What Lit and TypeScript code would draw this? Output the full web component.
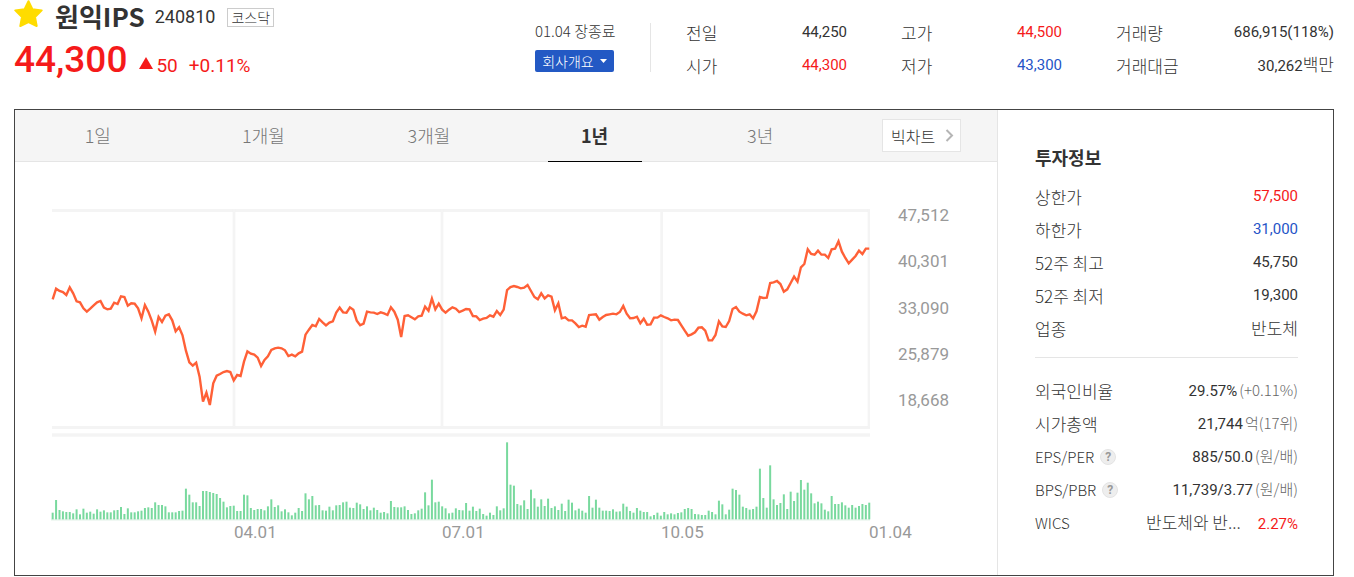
import { LitElement, html, svg, css } from "lit";
import { customElement, property, state } from "lit/decorators.js";
import { classMap } from "lit/directives/class-map.js";

type Tone = "up" | "down" | "flat";

interface Row {
  label: string;
  value: string;
  tone?: Tone;
  unit?: string;
  help?: boolean;
  text?: boolean;
}

// One entry per trading day, as depth below the top of the plot (thirds of a pixel).
const PRICES = [
  271, 239, 246, 249, 258, 235, 253, 277, 280, 298, 308, 299, 289, 280, 276, 296, 301, 299, 281, 285,
  262, 264, 290, 283, 284, 298, 328, 288, 308, 335, 368, 324, 339, 320, 316, 334, 367, 355, 379, 425,
  460, 470, 461, 503, 578, 551, 588, 523, 500, 495, 489, 486, 489, 514, 498, 501, 458, 427, 434, 437,
  446, 471, 453, 442, 423, 418, 416, 418, 424, 441, 437, 442, 433, 428, 377, 362, 348, 352, 330, 340,
  349, 341, 337, 311, 296, 310, 311, 295, 302, 335, 349, 344, 308, 310, 311, 315, 310, 313, 318, 295,
  308, 332, 384, 321, 319, 325, 331, 322, 320, 293, 305, 269, 301, 284, 302, 311, 302, 295, 299, 309,
  305, 300, 301, 321, 322, 333, 329, 327, 319, 323, 306, 318, 302, 243, 234, 231, 234, 238, 236, 228,
  246, 264, 271, 253, 268, 259, 263, 304, 283, 328, 325, 334, 334, 343, 354, 350, 353, 318, 317, 316,
  332, 324, 318, 316, 314, 316, 309, 291, 314, 328, 327, 323, 343, 329, 347, 346, 326, 326, 319, 324,
  328, 334, 332, 333, 349, 365, 380, 376, 370, 356, 355, 365, 394, 394, 378, 337, 352, 354, 336, 300,
  294, 308, 314, 319, 316, 328, 307, 264, 267, 266, 222, 220, 216, 225, 248, 241, 222, 203, 218, 175,
  165, 121, 135, 137, 125, 137, 137, 147, 121, 119, 97, 128, 147, 163, 152, 141, 125, 135, 119, 119,
];

const VOLUMES = [
  20, 58, 28, 24, 22, 22, 18, 30, 15, 32, 20, 23, 17, 30, 23, 27, 21, 21, 27, 28,
  37, 16, 33, 21, 21, 24, 26, 34, 36, 34, 51, 43, 43, 39, 21, 21, 21, 25, 26, 92,
  74, 51, 51, 40, 85, 85, 82, 79, 76, 64, 53, 36, 40, 41, 25, 25, 74, 72, 34, 28,
  31, 31, 27, 39, 60, 37, 42, 24, 30, 21, 12, 20, 34, 25, 78, 60, 70, 42, 43, 27,
  26, 38, 27, 42, 43, 51, 53, 35, 34, 50, 45, 31, 39, 27, 35, 28, 20, 22, 18, 55,
  37, 36, 36, 39, 28, 16, 18, 27, 32, 81, 42, 119, 51, 53, 39, 33, 18, 20, 33, 28,
  27, 49, 26, 38, 25, 32, 16, 11, 20, 13, 39, 27, 33, 231, 104, 101, 46, 42, 57, 31,
  89, 63, 38, 60, 40, 62, 34, 39, 28, 47, 25, 59, 50, 27, 32, 26, 20, 70, 35, 59,
  35, 26, 26, 25, 30, 23, 24, 47, 38, 25, 20, 34, 26, 22, 22, 9, 13, 20, 11, 22,
  15, 18, 15, 19, 21, 31, 34, 31, 16, 15, 13, 13, 26, 22, 15, 56, 45, 15, 29, 92,
  88, 74, 38, 34, 29, 31, 38, 152, 64, 35, 162, 60, 43, 49, 75, 31, 83, 55, 80, 118,
  89, 110, 78, 48, 53, 48, 29, 24, 70, 46, 46, 51, 42, 35, 43, 35, 40, 46, 43, 50,
];

const STEP = 10.25;
const BASE = 931;

@customElement("price-chart")
class PriceChart extends LitElement {
  static styles = css`
    :host {
      display: block;
      padding-left: 37px;
      font-family: Roboto, sans-serif;
      font-size: 17px;
      line-height: 20px;
      color: #999;
    }
    .plot {
      display: grid;
      grid-template-columns: 1fr 127px;
    }
    svg {
      display: block;
      width: 100%;
      height: 312px;
      overflow: visible;
    }
    .scale {
      display: flex;
      flex-direction: column;
      justify-content: space-between;
      height: 205px;
      padding-right: 48px;
      margin-top: -4px;
      text-align: right;
    }
    .dates {
      display: grid;
      grid-template-columns: 182fr 208fr 219fr 208fr 128px;
      padding-top: 1px;
    }
    .dates span:first-child {
      grid-column: 2;
    }
  `;

  render() {
    const points = PRICES.map((y, i) => `${2 + i * STEP},${y}`).join(" ");
    return html`
      <div class="plot">
        <svg viewBox="0 0 2454 936" preserveAspectRatio="none" role="img" aria-label="1년 주가 차트">
          <g fill="#f4f4f4">
            <rect x="0" y="0" width="2454" height="9"></rect>
            <rect x="0" y="651" width="2454" height="9"></rect>
            <rect x="0" y="673" width="2454" height="10"></rect>
            <rect x="542" y="0" width="8" height="655"></rect>
            <rect x="1166" y="0" width="8" height="655"></rect>
            <rect x="1825" y="0" width="8" height="655"></rect>
            <rect x="2447" y="0" width="7" height="655"></rect>
          </g>
          <rect x="-3" y="929" width="2457" height="6" fill="#e9f5ee"></rect>
          <g fill="#79d99e">
            ${VOLUMES.map(
              (v, i) => svg`<rect x=${-1 + i * STEP} y=${BASE - v} width="6" height=${v}></rect>`
            )}
          </g>
          <polyline points=${points} fill="none" stroke="#ff6037" stroke-width="2.4"
            stroke-linejoin="miter" vector-effect="non-scaling-stroke"></polyline>
        </svg>
        <div class="scale">
          ${["47,512", "40,301", "33,090", "25,879", "18,668"].map((t) => html`<span>${t}</span>`)}
        </div>
      </div>
      <div class="dates">
        ${["04.01", "07.01", "10.05", "01.04"].map((t) => html`<span>${t}</span>`)}
      </div>
    `;
  }
}

@customElement("info-list")
class InfoList extends LitElement {
  @property({ attribute: false }) rows: Row[] = [];

  static styles = css`
    :host {
      display: block;
    }
    dl {
      margin: 0;
    }
    .row {
      display: flex;
      justify-content: space-between;
      align-items: center;
      height: 33px;
      line-height: 33px;
      white-space: nowrap;
    }
    dt {
      display: flex;
      align-items: center;
      gap: 6px;
      font-size: 17px;
      font-weight: 300;
    }
    .latin {
      font-size: 15px;
    }
    dd {
      margin: 0;
      font-family: Roboto, "Noto Sans CJK KR", sans-serif;
      font-size: 15px;
    }
    .text {
      font-family: "Noto Sans CJK KR", sans-serif;
      font-size: 17px;
      font-weight: 300;
    }
    .name {
      margin-right: 17px;
    }
    .unit {
      font-family: "Noto Sans CJK KR", sans-serif;
      font-weight: 300;
      color: #666;
      padding-left: 2px;
    }
    .suffix {
      font-size: 17px;
      font-weight: 300;
    }
    .up {
      color: #f51a1a;
    }
    .down {
      color: #2554c7;
    }
    .help {
      width: 16px;
      height: 16px;
      padding: 0;
      border: 1px solid #e4e4e4;
      border-radius: 50%;
      background: #eee;
      color: #999;
      font: bold 12px/14px Roboto, sans-serif;
    }
  `;

  private renderNumber(r: Row) {
    const [, digits, suffix] = r.value.match(/^([^가-힣]*)([가-힣]*)$/) ?? ["", r.value, ""];
    return html`<span class=${r.tone ?? "flat"}>${digits}${suffix
        ? html`<span class="suffix">${suffix}</span>`
        : null}</span>${r.unit ? html`<span class="unit">${r.unit}</span>` : null}`;
  }

  render() {
    return html`<dl>
      ${this.rows.map(
        (r) => html`<div class="row">
          <dt class=${classMap({ latin: /^[A-Z]/.test(r.label) })}>
            ${r.label}${r.help
              ? html`<button class="help" type="button" aria-label="${r.label} 도움말">?</button>`
              : null}
          </dt>
          <dd>
            ${r.text ? html`<span class="text ${r.unit ? "name" : ""}">${r.value}</span>${r.unit
                  ? html`<span class="up">${r.unit}</span>`
                  : null}`
              : this.renderNumber(r)}
          </dd>
        </div>`
      )}
    </dl>`;
  }
}

const QUOTES: Row[][] = [
  [
    { label: "전일", value: "44,250" },
    { label: "시가", value: "44,300", tone: "up" },
  ],
  [
    { label: "고가", value: "44,500", tone: "up" },
    { label: "저가", value: "43,300", tone: "down" },
  ],
  [
    { label: "거래량", value: "686,915(118%)" },
    { label: "거래대금", value: "30,262백만" },
  ],
];

const LIMITS: Row[] = [
  { label: "상한가", value: "57,500", tone: "up" },
  { label: "하한가", value: "31,000", tone: "down" },
  { label: "52주 최고", value: "45,750" },
  { label: "52주 최저", value: "19,300" },
  { label: "업종", value: "반도체", text: true },
];

const FUNDAMENTALS: Row[] = [
  { label: "외국인비율", value: "29.57%", unit: "(+0.11%)" },
  { label: "시가총액", value: "21,744", unit: "억(17위)" },
  { label: "EPS/PER", value: "885/50.0", unit: "(원/배)", help: true },
  { label: "BPS/PBR", value: "11,739/3.77", unit: "(원/배)", help: true },
  { label: "WICS", value: "반도체와 반...", unit: "2.27%", text: true },
];

@customElement("app-root")
class AppRoot extends LitElement {
  @state() private range = "1년";

  static styles = css`
    :host {
      display: block;
      padding: 0 20px 0 14px;
      font-family: "Noto Sans CJK KR", "Noto Sans", sans-serif;
      color: #333;
      background: #fff;
    }
    header {
      display: flex;
      height: 109px;
      white-space: nowrap;
    }
    .identity {
      flex: 1;
    }
    .title {
      display: flex;
      align-items: center;
      height: 32px;
    }
    .star {
      width: 29px;
      height: 28px;
      margin: 0 12px 4px 0;
      padding: 0;
      border: 0;
      background: none;
    }
    .star svg {
      display: block;
    }
    h1 {
      margin: 0 10px 0 0;
      font-size: 26px;
      line-height: 32px;
      font-weight: 700;
    }
    .code {
      margin: 2px 12px 0 0;
      font-family: Roboto, sans-serif;
      font-size: 18px;
      line-height: 20px;
    }
    .market {
      margin-top: 3px;
      border: 1px solid #ccc;
      padding: 0 3px;
      font-size: 14px;
      line-height: 17px;
      font-weight: 300;
    }
    .price {
      display: flex;
      align-items: baseline;
      color: #f51a1a;
      font-family: Roboto, sans-serif;
      font-size: 19px;
      line-height: 56px;
    }
    .price strong {
      font-size: 37px;
      font-weight: 500;
      margin-right: 12px;
    }
    .price svg {
      margin-right: 3px;
      align-self: center;
    }
    .change {
      margin-right: 11px;
    }
    .status {
      display: flex;
      flex-direction: column;
      align-items: flex-start;
      width: 115px;
      margin-top: 23px;
      height: 49px;
      border-right: 1px solid #e5e5e5;
      font-size: 15px;
      line-height: 16px;
      font-weight: 300;
    }
    .overview {
      display: flex;
      align-items: center;
      justify-content: center;
      gap: 6px;
      width: 79px;
      height: 22px;
      margin-top: 11px;
      padding: 0;
      border: 0;
      border-radius: 2px;
      background: #2359c4;
      color: #fff;
      font: 300 14px/20px "Noto Sans CJK KR", sans-serif;
    }
    .quotes {
      display: grid;
      grid-template-columns: 161px 161px 218px;
      column-gap: 54px;
      margin: 16px 0 0 35px;
    }
    .panel {
      display: flex;
      border: 1px solid #444;
      height: 465px;
    }
    .chart {
      flex: 1;
      border-right: 1px solid #e5e5e5;
    }
    .tabs {
      display: flex;
      align-items: center;
      height: 51px;
      margin-bottom: 47px;
      padding-right: 36px;
      background: #f5f5f5;
      border-bottom: 1px solid #e5e5e5;
    }
    .tab {
      flex: 1;
      display: flex;
      justify-content: center;
      height: 52px;
      margin-bottom: -1px;
      padding: 0;
      border: 0;
      background: none;
      font: 300 18px/51px "Noto Sans CJK KR", sans-serif;
      color: #777;
    }
    .tab span {
      min-width: 94px;
      box-sizing: border-box;
      height: 52px;
    }
    .active {
      font-weight: 700;
      color: #333;
    }
    .active span {
      border-bottom: 1px solid #000;
    }
    .big {
      display: flex;
      align-items: center;
      justify-content: space-between;
      box-sizing: border-box;
      width: 79px;
      height: 33px;
      margin-left: 39px;
      padding: 0 6px 0 8px;
      border: 1px solid #e5e5e5;
      background: #fff;
      color: #333;
      font-size: 16px;
      line-height: 30px;
      font-weight: 300;
      text-decoration: none;
      white-space: nowrap;
    }
    aside {
      width: 263px;
      padding: 35px 35px 0 37px;
    }
    h2 {
      margin: 0 0 11px;
      font-size: 18px;
      line-height: 24px;
      font-weight: 700;
    }
    .lower {
      margin-top: 12px;
      padding-top: 16px;
      border-top: 1px solid #e5e5e5;
    }
  `;

  render() {
    return html`
      <header>
        <div class="identity">
          <div class="title">
            <button class="star" type="button" aria-label="관심종목">
              <svg width="29" height="28" viewBox="0 0 29 28">
                <path d="M14.500 1.200 18.400 9.200 27.700 10.400 21 17 22.700 26 14.500 22 6.300 26 8 17 1.300 10.400 10.600 9.200Z"
                  fill="#ffdc00" stroke="#ffdc00" stroke-width="2" stroke-linejoin="round"></path>
              </svg>
            </button>
            <h1>원익IPS</h1>
            <span class="code">240810</span>
            <span class="market">코스닥</span>
          </div>
          <div class="price">
            <strong>44,300</strong>
            <svg width="14" height="12" viewBox="0 0 14 12" aria-label="상승">
              <path d="M7 0 14 12H0Z" fill="#f51a1a"></path>
            </svg>
            <span class="change">50</span>
            <span>+0.11%</span>
          </div>
        </div>
        <div class="status">
          <span>01.04 장종료</span>
          <button class="overview" type="button">
            회사개요
            <svg width="7" height="4" viewBox="0 0 7 4"><path d="M0 0H7L3.500 4Z" fill="#fff"></path></svg>
          </button>
        </div>
        <div class="quotes">
          ${QUOTES.map((rows) => html`<info-list .rows=${rows}></info-list>`)}
        </div>
      </header>
      <main class="panel">
        <section class="chart">
          <nav class="tabs">
            ${["1일", "1개월", "3개월", "1년", "3년"].map(
              (t) => html`<button
                type="button"
                class=${classMap({ tab: true, active: t === this.range })}
                @click=${() => (this.range = t)}
              ><span>${t}</span></button>`
            )}
            <a class="big" href="#">빅차트
              <svg width="9" height="13" viewBox="0 0 9 13">
                <path d="M1.500 1 7 6.500 1.500 12" fill="none" stroke="#b5b5b5" stroke-width="2"></path>
              </svg>
            </a>
          </nav>
          <price-chart></price-chart>
        </section>
        <aside>
          <h2>투자정보</h2>
          <info-list .rows=${LIMITS}></info-list>
          <info-list class="lower" .rows=${FUNDAMENTALS}></info-list>
        </aside>
      </main>
    `;
  }
}
